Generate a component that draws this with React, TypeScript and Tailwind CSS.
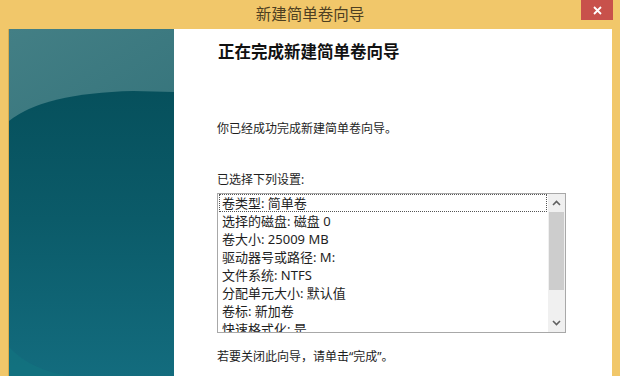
const items = [
  "卷类型: 简单卷",
  "选择的磁盘: 磁盘 0",
  "卷大小: 25009 MB",
  "驱动器号或路径: M:",
  "文件系统: NTFS",
  "分配单元大小: 默认值",
  "卷标: 新加卷",
  "快速格式化: 是",
];

function SidePanel() {
  return (
    <svg viewBox="0 0 166 347" preserveAspectRatio="none" className="w-full h-full block">
      <defs>
        <linearGradient id="top" x1="0" y1="0" x2="0.3" y2="1">
          <stop offset="0" stopColor="#437f85" />
          <stop offset="1" stopColor="#2b6b74" />
        </linearGradient>
        <linearGradient id="deep" x1="0" y1="0" x2="0" y2="1">
          <stop offset="0" stopColor="#06505c" />
          <stop offset="0.45" stopColor="#0b5b69" />
          <stop offset="1" stopColor="#136c7e" />
        </linearGradient>
      </defs>
      <rect width="166" height="347" fill="url(#top)" />
      <path d="M0 92 Q35 64 125 62 L166 63 L166 347 L0 347 Z" fill="url(#deep)" />
      <path d="M0 318 Q20 340 60 347 L0 347 Z" fill="#137480" opacity="0.6" />
    </svg>
  );
}

function Chevron({ up }: { up?: boolean }) {
  return (
    <svg width="9" height="6" viewBox="0 0 9 6" className="block">
      <polyline
        points={up ? "1,5 4.5,1.5 8,5" : "1,1 4.5,4.5 8,1"}
        fill="none"
        stroke="#606060"
        strokeWidth="1.6"
      />
    </svg>
  );
}

export default function App() {
  return (
    <div
      className="w-[620px] h-[376px] overflow-hidden bg-[#f1c76a] flex flex-col"
      style={{ fontFamily: '"Noto Sans", "Noto Sans CJK SC", sans-serif' }}
    >
      {/* Title bar */}
      <div className="h-[29px] flex shrink-0">
        <div className="w-[39px]" />
        <div className="flex-1 text-center text-[15.5px] leading-[29px] text-[#4e4022]">
          新建简单卷向导
        </div>
        <button className="w-[32px] h-[20px] bg-[#c8514b] flex items-center justify-center">
          <svg width="9" height="9" viewBox="0 0 9 9">
            <path d="M1 1 L8 8 M8 1 L1 8" stroke="#fff" strokeWidth="1.8" />
          </svg>
        </button>
        <div className="w-[7px]" />
      </div>

      {/* Body */}
      <div className="flex flex-1 min-h-0 pl-[8px] pr-[8px]">
        <div className="w-[166px] shrink-0 border-l border-[#d9ab4d]">
          <SidePanel />
        </div>
        <div className="flex-1 bg-white pl-[43px] text-[#1e1e1e]">
          <h1 className="mt-[12px] ml-[1px] text-[16.5px] leading-[22px] font-bold text-[#111]">
            正在完成新建简单卷向导
          </h1>
          <p className="mt-[58px] text-[12px] leading-[16px]">你已经成功完成新建简单卷向导。</p>
          <p className="mt-[35px] text-[12px] leading-[16px]">已选择下列设置:</p>

          <div className="mt-[5px] w-[349px] h-[140px] border border-[#a8a8a8] flex">
            <div className="flex-1 overflow-hidden pl-[1px]">
              {items.map((item, i) => (
                <div
                  key={item}
                  className={`h-[18px] pl-[3px] text-[13px] leading-[18px] whitespace-nowrap ${
                    i === 0 ? "outline outline-1 outline-dotted outline-[#555] -outline-offset-1" : ""
                  }`}
                >
                  {item}
                </div>
              ))}
            </div>
            <div className="w-[17px] bg-[#f0f0f0] flex flex-col ml-[1px]">
              <div className="h-[18px] flex items-center justify-center">
                <Chevron up />
              </div>
              <div className="h-[78px] mx-[1px] bg-[#cdcdcd]" />
              <div className="flex-1" />
              <div className="h-[18px] flex items-center justify-center">
                <Chevron />
              </div>
            </div>
          </div>

          <p className="mt-[16px] text-[12px] leading-[16px]">若要关闭此向导，请单击“完成”。</p>
        </div>
      </div>
    </div>
  );
}
